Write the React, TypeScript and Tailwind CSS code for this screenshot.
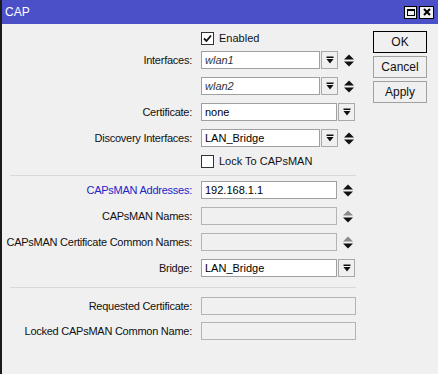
import React from "react";

const font = { fontFamily: '"Liberation Sans", Arial, sans-serif' };

function DropBtn() {
  return (
    <div className="w-[17px] h-[18px] border border-[#a9a9a9] bg-[#f0f0f0] flex items-center justify-center shrink-0">
      <svg width="8" height="8" viewBox="0 0 8 8">
        <rect x="0.5" y="0.5" width="7" height="1.5" fill="#111" />
        <polygon points="0.5,3 7.5,3 4,7.5" fill="#111" />
      </svg>
    </div>
  );
}

function Spin({ disabled = false }: { disabled?: boolean }) {
  return (
    <svg width="10" height="13" viewBox="0 0 10 13" className="shrink-0">
      <polygon points="0,5.5 10,5.5 5,0.5" fill={disabled ? "#8a8a8a" : "#111"} />
      <polygon points="0,7.5 10,7.5 5,12.5" fill="#111" />
    </svg>
  );
}

function Input({
  value = "",
  w,
  italic = false,
  disabled = false,
}: {
  value?: string;
  w: string;
  italic?: boolean;
  disabled?: boolean;
}) {
  return (
    <div
      className={`${w} h-[18px] border flex items-center px-[3px] shrink-0 ${
        disabled ? "bg-[#f0f0f0] border-[#b4b4b4]" : "bg-white border-[#a0a0a0]"
      } ${italic ? "italic text-[#333]" : "text-black"}`}
    >
      {value}
    </div>
  );
}

function Row({
  label,
  children,
  blue = false,
  className = "",
}: {
  label?: string;
  children: React.ReactNode;
  blue?: boolean;
  className?: string;
}) {
  return (
    <div className={`flex items-center h-[18px] ${className}`}>
      <div
        className={`w-[191px] text-right pr-[1px] whitespace-nowrap tracking-[-0.25px] ${
          blue ? "text-[#2323c8]" : "text-[#111]"
        }`}
      >
        {label ? label + ":" : ""}
      </div>
      <div className="ml-[8px] flex items-center">{children}</div>
    </div>
  );
}

function CheckBox({ checked }: { checked: boolean }) {
  return (
    <div className="w-[13px] h-[13px] border border-[#333] bg-white flex items-center justify-center">
      {checked && (
        <svg width="9" height="9" viewBox="0 0 9 9">
          <polyline points="1,4.5 3.5,7 8,1.5" fill="none" stroke="#111" strokeWidth="1.8" />
        </svg>
      )}
    </div>
  );
}

export default function App() {
  return (
    <div
      className="w-[438px] h-[374px] bg-[#f0f0f0] border-l-2 border-[#1a1a1a] flex flex-col text-[11px] overflow-hidden"
      style={font}
    >
      <div className="h-[24px] bg-[#4b50c9] flex items-center justify-between pl-[3px] pr-[4px] shrink-0">
        <span className="text-white text-[12px]">CAP</span>
        <div className="flex gap-[2px] items-center">
          <div className="w-[13px] h-[13px] border border-black bg-[#f0f0f0] flex items-center justify-center">
            <div className="w-[8px] h-[7px] border border-black border-t-2" />
          </div>
          <div className="w-[15px] h-[13px] border border-black bg-[#f0f0f0] flex items-center justify-center">
            <svg width="8" height="8" viewBox="0 0 8 8">
              <path d="M1 1 L7 7 M7 1 L1 7" stroke="#000" strokeWidth="2" />
            </svg>
          </div>
        </div>
      </div>
      <div className="flex flex-1">
        <div className="w-[362px] flex flex-col pt-[5px]">
          <Row>
            <div className="flex items-center gap-[5px]">
              <CheckBox checked />
              <span className="text-[#111]">Enabled</span>
            </div>
          </Row>
          <Row label="Interfaces" className="mt-[4px]">
            <Input value="wlan1" w="w-[119px]" italic />
            <div className="ml-[1px]">
              <DropBtn />
            </div>
            <div className="ml-[6px]">
              <Spin />
            </div>
          </Row>
          <Row className="mt-[8px]">
            <Input value="wlan2" w="w-[119px]" italic />
            <div className="ml-[1px]">
              <DropBtn />
            </div>
            <div className="ml-[6px]">
              <Spin />
            </div>
          </Row>
          <Row label="Certificate" className="mt-[8px]">
            <Input value="none" w="w-[136px]" />
            <div className="ml-[1px]">
              <DropBtn />
            </div>
          </Row>
          <Row label="Discovery Interfaces" className="mt-[8px]">
            <Input value="LAN_Bridge" w="w-[119px]" />
            <div className="ml-[1px]">
              <DropBtn />
            </div>
            <div className="ml-[6px]">
              <Spin />
            </div>
          </Row>
          <Row className="mt-[5px]">
            <div className="flex items-center gap-[5px]">
              <CheckBox checked={false} />
              <span className="text-[#111]">Lock To CAPsMAN</span>
            </div>
          </Row>
          <div className="ml-[8px] w-[346px] h-px bg-[#d8d8d8] mt-[5px]" />
          <Row label="CAPsMAN Addresses" blue className="mt-[5px]">
            <Input value="192.168.1.1" w="w-[136px]" />
            <div className="ml-[6px]">
              <Spin />
            </div>
          </Row>
          <Row label="CAPsMAN Names" className="mt-[8px]">
            <Input w="w-[136px]" disabled />
            <div className="ml-[6px]">
              <Spin disabled />
            </div>
          </Row>
          <Row label="CAPsMAN Certificate Common Names" className="mt-[8px]">
            <Input w="w-[136px]" disabled />
            <div className="ml-[6px]">
              <Spin disabled />
            </div>
          </Row>
          <Row label="Bridge" className="mt-[8px]">
            <Input value="LAN_Bridge" w="w-[136px]" />
            <div className="ml-[1px]">
              <DropBtn />
            </div>
          </Row>
          <div className="ml-[8px] w-[346px] h-px bg-[#d8d8d8] mt-[10px]" />
          <Row label="Requested Certificate" className="mt-[9px]">
            <Input w="w-[155px]" disabled />
          </Row>
          <Row label="Locked CAPsMAN Common Name" className="mt-[7px]">
            <Input w="w-[155px]" disabled />
          </Row>
        </div>
        <div className="flex flex-col gap-[3px] pt-[7px] ml-[9px]">
          <div className="w-[54px] h-[22px] border border-black bg-[#f0f0f0] flex items-center justify-center text-[12px] text-[#111]">
            OK
          </div>
          <div className="w-[54px] h-[22px] border border-[#a0a0a0] bg-[#f0f0f0] flex items-center justify-center text-[12px] text-[#111]">
            Cancel
          </div>
          <div className="w-[54px] h-[22px] border border-[#a0a0a0] bg-[#f0f0f0] flex items-center justify-center text-[12px] text-[#111]">
            Apply
          </div>
        </div>
      </div>
    </div>
  );
}
